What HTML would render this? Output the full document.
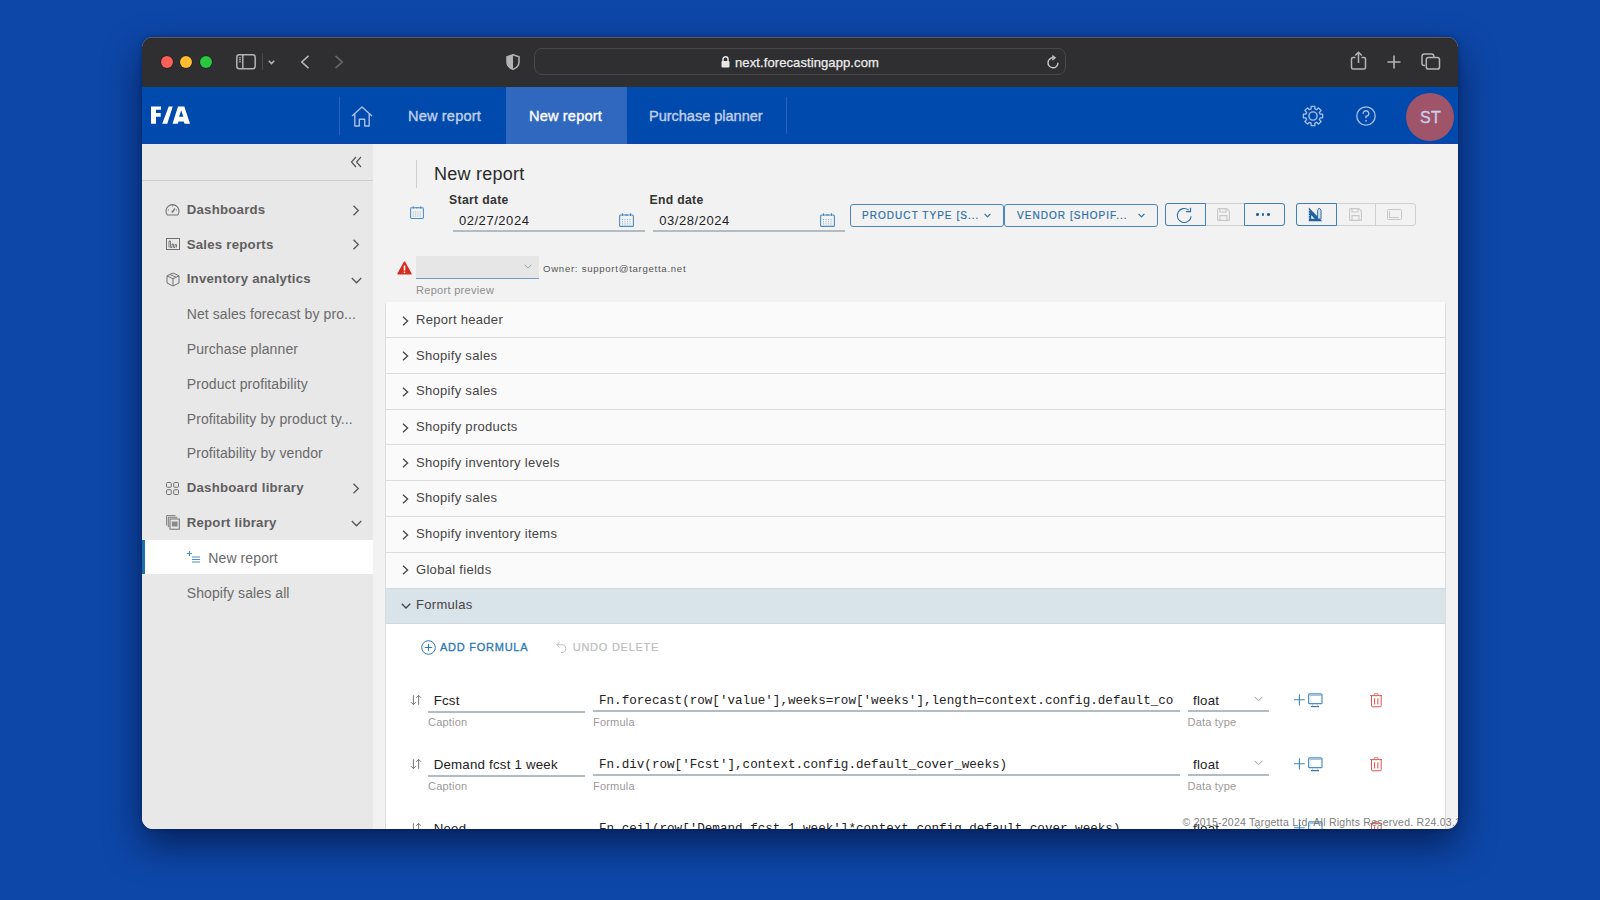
<!DOCTYPE html><html><head><meta charset="utf-8"><style>
*{margin:0;padding:0;box-sizing:border-box}
html,body{width:1600px;height:900px;overflow:hidden}
body{background:#0d47a8;font-family:"Liberation Sans",sans-serif;position:relative}
.a{position:absolute}
.t{position:absolute;white-space:nowrap;line-height:1}
svg{position:absolute;overflow:visible}
.win{position:absolute;left:142px;top:37px;width:1316px;height:792px;border-radius:11px;overflow:hidden;background:#f2f2f2;box-shadow:0 0 4px rgba(0,10,40,.3),0 16px 36px rgba(0,8,40,.6)}
.in{position:absolute;left:-142px;top:-37px;width:1600px;height:900px}
.sb{color:#5f5f5f;font-weight:bold;font-size:13.2px;letter-spacing:0.25px}
.sr{color:#6a6a6a;font-size:14px;letter-spacing:0.1px}
.acc{position:absolute;left:386px;width:1060px;height:36px;background:#fafafa;border-bottom:1px solid #dcdcdc}
.acct{position:absolute;left:30px;top:12px;font-size:13.5px;color:#444;white-space:nowrap;line-height:1;letter-spacing:0.15px}
.lbl{position:absolute;font-size:11px;color:#9a9a9a;white-space:nowrap;line-height:1;letter-spacing:0.2px}
.ul{position:absolute;height:2px;background:#b3bcc2}
.mono{position:absolute;font-family:"Liberation Mono",monospace;font-size:12.6px;color:#222;white-space:nowrap;line-height:1}
.btn{position:absolute;top:204px;height:23px;border:1px solid #4b87bf;border-radius:3px}
.gbtn{position:absolute;top:204px;height:22px;border:1px solid #d2d2d2;border-radius:3px}
</style></head><body>
<div class="win"><div class="in">
<div class="a" style="left:142px;top:37px;width:1316px;height:50px;background:#2f2f31;border-top:1px solid #5c5c5e"></div>
<div class="a" style="left:161px;top:55.8px;width:12px;height:12px;border-radius:50%;background:#fe5f57;box-shadow:0 0 0 0.6px rgba(0,0,0,.35)"></div>
<div class="a" style="left:180.3px;top:55.8px;width:12px;height:12px;border-radius:50%;background:#febc2e;box-shadow:0 0 0 0.6px rgba(0,0,0,.35)"></div>
<div class="a" style="left:199.5px;top:55.8px;width:12px;height:12px;border-radius:50%;background:#28c840;box-shadow:0 0 0 0.6px rgba(0,0,0,.35)"></div>
<svg style="left:236px;top:53.5px" width="20" height="16" viewBox="0 0 20 16"><rect x="0.8" y="0.8" width="18.4" height="14" rx="2.5" fill="none" stroke="#b4b4b6" stroke-width="1.5"/><line x1="6.8" y1="1" x2="6.8" y2="15" stroke="#b4b4b6" stroke-width="1.5"/><path d="M2.8 3.8 H5 M2.8 5.8 H5 M2.8 7.8 H5" stroke="#b4b4b6" stroke-width="1"/></svg>
<div class="a" style="left:262px;top:53px;width:1px;height:17px;background:#4a4a4c"></div>
<svg style="left:268px;top:59.5px" width="7" height="5" viewBox="0 0 7 5"><path d="M0.8 0.8 L3.5 3.6 L6.2 0.8" fill="none" stroke="#b4b4b6" stroke-width="1.6"/></svg>
<svg style="left:300px;top:55px" width="10" height="14" viewBox="0 0 10 14"><path d="M8.5 0.8 L1.8 7 L8.5 13.2" fill="none" stroke="#b4b4b6" stroke-width="1.6"/></svg>
<svg style="left:334px;top:55px" width="10" height="14" viewBox="0 0 10 14"><path d="M1.5 0.8 L8.2 7 L1.5 13.2" fill="none" stroke="#68686a" stroke-width="1.6"/></svg>
<svg style="left:506px;top:54px" width="14" height="16" viewBox="0 0 14 16"><path d="M7 0.8 L13 2.8 L13 8 C13 11.5 10.5 14 7 15.3 C3.5 14 1 11.5 1 8 L1 2.8 Z" fill="none" stroke="#b4b4b6" stroke-width="1.5"/><path d="M7 0.8 L1 2.8 L1 8 C1 11.5 3.5 14 7 15.3 Z" fill="#b4b4b6"/></svg>
<div class="a" style="left:534px;top:48px;width:532px;height:27px;border-radius:8px;border:1px solid #48484a"></div>
<svg style="left:721px;top:55.5px" width="9" height="12" viewBox="0 0 9 12"><path d="M2 5.5 V3.3 A2.5 2.5 0 0 1 7 3.3 V5.5" fill="none" stroke="#e8e8e8" stroke-width="1.5"/><rect x="0.5" y="5" width="8" height="6.5" rx="1" fill="#e8e8e8"/></svg>
<div class="t" style="left:735px;top:55.5px;font-size:13px;color:#ededed;letter-spacing:0.1px;-webkit-text-stroke:0.25px #ededed">next.forecastingapp.com</div>
<svg style="left:1047px;top:55px" width="13" height="14" viewBox="0 0 13 14"><path d="M11 7.8 A5 5 0 1 1 6.5 2.8" fill="none" stroke="#c8c8ca" stroke-width="1.4"/><path d="M5.3 0.6 L8 2.8 L5.3 5" fill="none" stroke="#c8c8ca" stroke-width="1.4"/></svg>
<svg style="left:1350px;top:51px" width="17" height="19" viewBox="0 0 17 19"><path d="M5.5 6.5 H3 Q1.5 6.5 1.5 8 V16.5 Q1.5 18 3 18 H14 Q15.5 18 15.5 16.5 V8 Q15.5 6.5 14 6.5 H11.5" fill="none" stroke="#b4b4b6" stroke-width="1.5"/><path d="M8.5 12 V1.3 M5.2 4.5 L8.5 1.2 L11.8 4.5" fill="none" stroke="#b4b4b6" stroke-width="1.5"/></svg>
<svg style="left:1387px;top:54.5px" width="14" height="14" viewBox="0 0 14 14"><path d="M7 0.5 V13.5 M0.5 7 H13.5" fill="none" stroke="#b4b4b6" stroke-width="1.6"/></svg>
<svg style="left:1421px;top:52.5px" width="20" height="17" viewBox="0 0 20 17"><path d="M4 12.5 H3.3 Q1 12.5 1 10.2 V3.3 Q1 1 3.3 1 H10.5 Q12.8 1 12.8 3.3 V4" fill="none" stroke="#b4b4b6" stroke-width="1.5"/><rect x="5.3" y="4.6" width="13.2" height="11.5" rx="2.2" fill="none" stroke="#b4b4b6" stroke-width="1.5"/></svg>
<div class="a" style="left:142px;top:87px;width:1316px;height:57px;background:#004aad;border-bottom:1px solid #1c3daa"></div>
<svg style="left:146px;top:100px" width="50" height="30" viewBox="146 100 50 30"><path fill="#fff" d="M151 106.5 H161 V109.8 H156 V113 H160.7 V116.8 H156 V123.8 H151 Z M168.7 106.5 H172.7 L167.3 123.8 H162.2 Z M178 106.5 H184.3 L190 123.8 H184.6 L183.6 121.6 H178.6 L177.8 123.8 H172.5 Z M181.2 110.2 L179.1 116.8 H183.3 Z"/></svg>
<div class="a" style="left:339px;top:97px;width:1px;height:38px;background:#2a60b8"></div>
<svg style="left:351px;top:105.5px" width="22" height="21" viewBox="0 0 22 21"><path d="M1 10 L11 1 L21 10 M3.8 7.8 V20 H8.3 V13.2 H13.7 V20 H18.2 V7.8" fill="none" stroke="#a9bfe6" stroke-width="1.4" stroke-linejoin="round"/></svg>
<div class="a" style="left:506px;top:87px;width:121px;height:57px;background:#3068bf"></div>
<div class="t" style="left:408px;top:109px;color:#c2cfeb;font-size:14.6px;letter-spacing:0.15px;-webkit-text-stroke:0.35px #c2cfeb">New report</div>
<div class="t" style="left:529px;top:109px;color:#fff;font-size:14.6px;letter-spacing:0.15px;-webkit-text-stroke:0.35px #fff">New report</div>
<div class="t" style="left:649px;top:109px;color:#c2cfeb;font-size:14.6px;letter-spacing:0.15px;-webkit-text-stroke:0.35px #c2cfeb;letter-spacing:-0.05px">Purchase planner</div>
<div class="a" style="left:786px;top:97px;width:1px;height:37px;background:#2a60b8"></div>
<svg style="left:1302px;top:104.7px" width="22" height="22" viewBox="0 0 22 22"><path d="M9.11 3.95 L9.13 1.38 L12.87 1.38 L12.89 3.95 L14.65 4.68 L16.48 2.88 L19.12 5.52 L17.32 7.35 L18.05 9.11 L20.62 9.13 L20.62 12.87 L18.05 12.89 L17.32 14.65 L19.12 16.48 L16.48 19.12 L14.65 17.32 L12.89 18.05 L12.87 20.62 L9.13 20.62 L9.11 18.05 L7.35 17.32 L5.52 19.12 L2.88 16.48 L4.68 14.65 L3.95 12.89 L1.38 12.87 L1.38 9.13 L3.95 9.11 L4.68 7.35 L2.88 5.52 L5.52 2.88 L7.35 4.68 Z" fill="none" stroke="#a9bfe6" stroke-width="1.3" stroke-linejoin="round"/><circle cx="11" cy="11" r="4.1" fill="none" stroke="#a9bfe6" stroke-width="1.4"/></svg>
<svg style="left:1356px;top:106px" width="20" height="20" viewBox="0 0 20 20"><circle cx="10" cy="10" r="9.2" fill="none" stroke="#a9bfe6" stroke-width="1.3"/><path d="M7.2 7.7 A2.8 2.8 0 1 1 10 10.3 V12.2" fill="none" stroke="#a9bfe6" stroke-width="1.4"/><circle cx="10" cy="14.8" r="0.9" fill="#a9bfe6"/></svg>
<div class="a" style="left:1405.6px;top:92.7px;width:48px;height:48px;border-radius:50%;background:#a0546a"></div>
<div class="t" style="left:1420px;top:109.5px;font-size:16px;color:#c9d2ea;letter-spacing:0.4px;-webkit-text-stroke:0.3px #c9d2ea">ST</div>
<div class="a" style="left:142px;top:144px;width:231px;height:700px;background:#e8e8e8"></div>
<svg style="left:350px;top:156px" width="12" height="12" viewBox="0 0 12 12"><path d="M6 1 L1.5 6 L6 11 M11 1 L6.5 6 L11 11" fill="none" stroke="#555" stroke-width="1.2"/></svg>
<div class="a" style="left:142px;top:180px;width:231px;height:1px;background:#cfcfcf"></div>
<div class="t sb" style="left:186.7px;top:202.8px">Dashboards</div>
<svg style="left:165px;top:202.5px" width="15" height="13" viewBox="0 0 15 13"><path d="M2.3 12 A6.5 6.5 0 1 1 12.7 12 Z" fill="none" stroke="#707070" stroke-width="1.1" stroke-linejoin="round"/><path d="M7.5 8.8 L10 5.5" stroke="#707070" stroke-width="1.3"/><circle cx="7.5" cy="8.8" r="1" fill="#707070"/><path d="M3 7 H4 M11 7 H12 M7.5 2.5 V3.5" stroke="#707070" stroke-width="0.9"/></svg>
<div class="t sb" style="left:186.7px;top:237.6px">Sales reports</div>
<svg style="left:165.5px;top:238px" width="14" height="12" viewBox="0 0 14 12"><rect x="0.5" y="0.5" width="13" height="11" fill="none" stroke="#707070" stroke-width="1"/><path d="M3 9.5 V3 H4.5 V9.5 H6 V6 H7.5 V9.5 H9 V6.5 H10.5 V9.5" fill="none" stroke="#707070" stroke-width="0.9"/></svg>
<div class="t sb" style="left:186.7px;top:272.4px">Inventory analytics</div>
<svg style="left:165.5px;top:271.5px" width="14" height="15" viewBox="0 0 14 15"><path d="M7 1 L13 3.8 V11 L7 14 L1 11 V3.8 Z M1 3.8 L7 6.8 L13 3.8 M7 6.8 V14 M4 2.4 L10 5.3" fill="none" stroke="#707070" stroke-width="1" stroke-linejoin="round"/></svg>
<svg style="left:352px;top:204.5px" width="8" height="11" viewBox="0 0 8 11"><path d="M1.5 0.8 L6.3 5.5 L1.5 10.2" fill="none" stroke="#555" stroke-width="1.3"/></svg>
<svg style="left:352px;top:239.3px" width="8" height="11" viewBox="0 0 8 11"><path d="M1.5 0.8 L6.3 5.5 L1.5 10.2" fill="none" stroke="#555" stroke-width="1.3"/></svg>
<svg style="left:350.5px;top:276.5px" width="11" height="7" viewBox="0 0 11 7"><path d="M0.8 1 L5.5 5.8 L10.2 1" fill="none" stroke="#555" stroke-width="1.3"/></svg>
<div class="t sr" style="left:186.7px;top:307.2px">Net sales forecast by pro...</div>
<div class="t sr" style="left:186.7px;top:342.0px">Purchase planner</div>
<div class="t sr" style="left:186.7px;top:376.8px">Product profitability</div>
<div class="t sr" style="left:186.7px;top:411.6px">Profitability by product ty...</div>
<div class="t sr" style="left:186.7px;top:446.4px">Profitability by vendor</div>
<div class="t sb" style="left:186.7px;top:481.2px">Dashboard library</div>
<svg style="left:166px;top:481.5px" width="13" height="13" viewBox="0 0 13 13"><rect x="0.5" y="0.5" width="4.8" height="4.8" rx="1" fill="none" stroke="#707070" stroke-width="1"/><rect x="7.7" y="0.5" width="4.8" height="4.8" rx="1" fill="none" stroke="#707070" stroke-width="1"/><rect x="0.5" y="7.7" width="4.8" height="4.8" rx="1" fill="none" stroke="#707070" stroke-width="1"/><rect x="7.7" y="7.7" width="4.8" height="4.8" rx="1" fill="none" stroke="#707070" stroke-width="1"/></svg>
<svg style="left:352px;top:483px" width="8" height="11" viewBox="0 0 8 11"><path d="M1.5 0.8 L6.3 5.5 L1.5 10.2" fill="none" stroke="#555" stroke-width="1.3"/></svg>
<div class="t sb" style="left:186.7px;top:516.0px">Report library</div>
<svg style="left:166px;top:515px" width="14" height="15" viewBox="0 0 14 15"><path d="M0.6 10.5 V0.6 H9.5" fill="none" stroke="#707070" stroke-width="0.9"/><path d="M2.3 12.2 V2.3 H11.2" fill="none" stroke="#707070" stroke-width="0.9"/><rect x="4" y="4" width="9.3" height="10.2" fill="none" stroke="#707070" stroke-width="1"/><rect x="5.8" y="6.5" width="5.8" height="5" fill="#8a8a8a"/></svg>
<svg style="left:350.5px;top:519.5px" width="11" height="7" viewBox="0 0 11 7"><path d="M0.8 1 L5.5 5.8 L10.2 1" fill="none" stroke="#555" stroke-width="1.3"/></svg>
<div class="a" style="left:142px;top:539.8px;width:231px;height:34.2px;background:#fff"></div>
<div class="a" style="left:142px;top:540px;width:3px;height:34px;background:#1a70aa"></div>
<svg style="left:187px;top:551px" width="14" height="12" viewBox="0 0 14 12"><path d="M2.5 0 V5 M0 2.5 H5" stroke="#4a90c8" stroke-width="1.2"/><path d="M5 6 H13 M5 8.5 H13 M5 11 H13" stroke="#4a90c8" stroke-width="1.2"/></svg>
<div class="t sr" style="left:208.3px;top:550.8px">New report</div>
<div class="t sr" style="left:186.7px;top:585.6px">Shopify sales all</div>
<div class="a" style="left:416px;top:159.5px;width:1px;height:28px;background:#cfcfcf"></div>
<div class="t" style="left:434px;top:164.8px;font-size:18px;color:#2a2a2a;letter-spacing:0.25px">New report</div>
<div class="t" style="left:449px;top:194.2px;font-size:12.2px;color:#333;font-weight:bold;letter-spacing:0.35px">Start date</div>
<div class="t" style="left:649.6px;top:194.2px;font-size:12.2px;color:#333;font-weight:bold;letter-spacing:0.3px">End date</div>
<svg style="left:410px;top:206px" width="14" height="13" viewBox="0 0 15 14"><rect x="0.6" y="2" width="13.8" height="11.4" rx="1" fill="none" stroke="#4a8bc4" stroke-width="1.1"/><path d="M3.5 0.3 V3 M11.5 0.3 V3 M6 2 H9" stroke="#4a8bc4" stroke-width="1.1"/><path d="M3 6.5 H4 M5.5 6.5 H6.5 M8 6.5 H9 M10.5 6.5 H11.5 M3 8.7 H4 M5.5 8.7 H6.5 M8 8.7 H9 M10.5 8.7 H11.5 M3 10.9 H4 M5.5 10.9 H6.5 M8 10.9 H9 M10.5 10.9 H11.5" stroke="#86aed0" stroke-width="1"/></svg>
<div class="t" style="left:458.9px;top:214px;font-size:13px;color:#222;letter-spacing:0.55px">02/27/2024</div>
<div class="t" style="left:659.2px;top:214px;font-size:13px;color:#222;letter-spacing:0.55px">03/28/2024</div>
<svg style="left:619px;top:212.5px" width="15" height="14" viewBox="0 0 15 14"><rect x="0.6" y="2" width="13.8" height="11.4" rx="1" fill="none" stroke="#4a8bc4" stroke-width="1.1"/><path d="M3.5 0.3 V3 M11.5 0.3 V3 M6 2 H9" stroke="#4a8bc4" stroke-width="1.1"/><path d="M3 6.5 H4 M5.5 6.5 H6.5 M8 6.5 H9 M10.5 6.5 H11.5 M3 8.7 H4 M5.5 8.7 H6.5 M8 8.7 H9 M10.5 8.7 H11.5 M3 10.9 H4 M5.5 10.9 H6.5 M8 10.9 H9 M10.5 10.9 H11.5" stroke="#86aed0" stroke-width="1"/></svg>
<svg style="left:819.5px;top:212.5px" width="15" height="14" viewBox="0 0 15 14"><rect x="0.6" y="2" width="13.8" height="11.4" rx="1" fill="none" stroke="#4a8bc4" stroke-width="1.1"/><path d="M3.5 0.3 V3 M11.5 0.3 V3 M6 2 H9" stroke="#4a8bc4" stroke-width="1.1"/><path d="M3 6.5 H4 M5.5 6.5 H6.5 M8 6.5 H9 M10.5 6.5 H11.5 M3 8.7 H4 M5.5 8.7 H6.5 M8 8.7 H9 M10.5 8.7 H11.5 M3 10.9 H4 M5.5 10.9 H6.5 M8 10.9 H9 M10.5 10.9 H11.5" stroke="#86aed0" stroke-width="1"/></svg>
<div class="ul" style="left:452.7px;top:230px;width:192px"></div>
<div class="ul" style="left:653px;top:230px;width:192px"></div>
<div class="btn" style="left:849.7px;width:154px"></div>
<div class="btn" style="left:1004.3px;width:154px"></div>
<div class="t" style="left:862px;top:210.5px;font-size:10px;color:#2a6fa8;letter-spacing:1.05px;-webkit-text-stroke:0.2px #2a6fa8">PRODUCT TYPE [S...</div>
<div class="t" style="left:1017px;top:210.5px;font-size:10px;color:#2a6fa8;letter-spacing:1.05px;-webkit-text-stroke:0.2px #2a6fa8">VENDOR [SHOPIF...</div>
<svg style="left:983.5px;top:213px" width="7" height="5" viewBox="0 0 7 5"><path d="M0.6 0.8 L3.5 3.8 L6.4 0.8" fill="none" stroke="#2a6fa8" stroke-width="1.2"/></svg>
<svg style="left:1137.5px;top:213px" width="7" height="5" viewBox="0 0 7 5"><path d="M0.6 0.8 L3.5 3.8 L6.4 0.8" fill="none" stroke="#2a6fa8" stroke-width="1.2"/></svg>
<div class="a" style="left:1164.5px;top:203px;width:120px;height:23px;border:1px solid #d0d0d0;border-radius:3px"></div>
<div class="a" style="left:1164.5px;top:203px;width:41px;height:23px;border:1.3px solid #3f80ba;border-radius:3px 0 0 3px"></div>
<div class="a" style="left:1243.5px;top:203px;width:41px;height:23px;border:1.3px solid #3f80ba;border-radius:0 3px 3px 0"></div>
<svg style="left:1176px;top:206.5px" width="17" height="17" viewBox="0 0 17 17"><path d="M15.2 9.4 A7 7 0 1 1 12.6 3.0" fill="none" stroke="#2a6fa8" stroke-width="1.1"/><path d="M9.9 4.6 H14.5 V0.8" fill="none" stroke="#2a6fa8" stroke-width="1.2"/></svg>
<svg style="left:1217.3px;top:207.8px" width="13" height="13" viewBox="0 0 13 13"><path d="M1.6 0.6 H9.8 L12.4 3.2 V11.4 Q12.4 12.4 11.4 12.4 H1.6 Q0.6 12.4 0.6 11.4 V1.6 Q0.6 0.6 1.6 0.6 Z" fill="none" stroke="#c8c8c8" stroke-width="1.1"/><path d="M3 0.6 V4 H9 V0.6 M3 12.4 V7.6 H10 V12.4" fill="none" stroke="#c8c8c8" stroke-width="1.1"/></svg>
<div class="a" style="left:1255.95px;top:213.1px;width:2.7px;height:2.7px;border-radius:50%;background:#1f66a6"></div>
<div class="a" style="left:1261.65px;top:213.1px;width:2.7px;height:2.7px;border-radius:50%;background:#1f66a6"></div>
<div class="a" style="left:1267.3500000000001px;top:213.1px;width:2.7px;height:2.7px;border-radius:50%;background:#1f66a6"></div>
<div class="a" style="left:1295.5px;top:203px;width:120px;height:23px;border:1px solid #d0d0d0;border-radius:3px"></div>
<div class="a" style="left:1375px;top:203px;width:1px;height:23px;background:#d0d0d0"></div>
<div class="a" style="left:1295.5px;top:203px;width:41px;height:23px;border:1.3px solid #3f80ba;border-radius:3px 0 0 3px"></div>
<svg style="left:1308px;top:206.5px" width="15" height="15" viewBox="0 0 15 15"><path d="M0.8 0.5 L14.2 14.2 H0.8 Z" fill="#1f63a0"/><path d="M3.2 8.2 V11.8 H6.8 Z" fill="#f2f2f2"/><path d="M0.4 3.5 H1.8 M0.4 6 H1.8 M0.4 8.5 H1.8 M0.4 11 H1.8" stroke="#f2f2f2" stroke-width="0.7"/><path d="M9.6 12 V3.2 L11.3 1 L13 3.2 V12 Z" fill="#cfe0ee" stroke="#1f63a0" stroke-width="0.9"/></svg>
<svg style="left:1348.6px;top:208px" width="13" height="13" viewBox="0 0 13 13"><path d="M1.6 0.6 H9.8 L12.4 3.2 V11.4 Q12.4 12.4 11.4 12.4 H1.6 Q0.6 12.4 0.6 11.4 V1.6 Q0.6 0.6 1.6 0.6 Z" fill="none" stroke="#c8c8c8" stroke-width="1.1"/><path d="M3 0.6 V4 H9 V0.6 M3 12.4 V7.6 H10 V12.4" fill="none" stroke="#c8c8c8" stroke-width="1.1"/></svg>
<div class="a" style="left:1387.3px;top:208.7px;width:14.3px;height:11px;border:1.1px solid #c8c8c8;border-radius:1.5px"></div>
<div class="a" style="left:1389.4px;top:210.6px;width:1px;height:7px;background:#c8c8c8"></div>
<div class="a" style="left:1389.4px;top:217.2px;width:10px;height:1px;background:#c8c8c8"></div>
<svg style="left:397px;top:260.5px" width="15" height="14" viewBox="0 0 15 14"><path d="M7.5 1.2 L14 12.8 H1 Z" fill="#d92a1f" stroke="#d92a1f" stroke-width="1.4" stroke-linejoin="round"/><path d="M7.5 4.5 V9.5" stroke="#fff" stroke-width="1.6"/><circle cx="7.5" cy="11.3" r="0.9" fill="#fff"/></svg>
<div class="a" style="left:416px;top:256px;width:122.5px;height:22.5px;background:#e6e6e6;border-bottom:1px solid #6e9cc6"></div>
<svg style="left:524px;top:264px" width="8" height="5" viewBox="0 0 8 5"><path d="M0.6 0.8 L4 4 L7.4 0.8" fill="none" stroke="#9aa6b2" stroke-width="1"/></svg>
<div class="t" style="left:543px;top:264.4px;font-size:9.6px;color:#555;letter-spacing:0.72px">Owner: support@targetta.net</div>
<div class="t" style="left:416px;top:285.3px;font-size:11px;color:#8e8e8e;letter-spacing:0.3px">Report preview</div>
<div class="a" style="left:385px;top:301.5px;width:1061px;height:560px;border:1px solid #dcdcdc;border-radius:3px 3px 0 0;background:#fff"></div>
<div class="a" style="left:386px;top:302px;width:1059px;height:35px;background:#fafafa"></div>
<div class="a" style="left:386px;top:337px;width:1059px;height:1px;background:#dcdcdc"></div>
<svg style="left:402px;top:315.5px" width="7" height="10" viewBox="0 0 7 10"><path d="M1 0.8 L5.6 5 L1 9.2" fill="none" stroke="#444" stroke-width="1.3"/></svg>
<div class="t" style="left:416px;top:312.8px;font-size:13px;color:#444;letter-spacing:0.3px">Report header</div>
<div class="a" style="left:386px;top:338px;width:1059px;height:35px;background:#fafafa"></div>
<div class="a" style="left:386px;top:373px;width:1059px;height:1px;background:#dcdcdc"></div>
<svg style="left:402px;top:351.2px" width="7" height="10" viewBox="0 0 7 10"><path d="M1 0.8 L5.6 5 L1 9.2" fill="none" stroke="#444" stroke-width="1.3"/></svg>
<div class="t" style="left:416px;top:348.5px;font-size:13px;color:#444;letter-spacing:0.3px">Shopify sales</div>
<div class="a" style="left:386px;top:374px;width:1059px;height:35px;background:#fafafa"></div>
<div class="a" style="left:386px;top:409px;width:1059px;height:1px;background:#dcdcdc"></div>
<svg style="left:402px;top:386.9px" width="7" height="10" viewBox="0 0 7 10"><path d="M1 0.8 L5.6 5 L1 9.2" fill="none" stroke="#444" stroke-width="1.3"/></svg>
<div class="t" style="left:416px;top:384.2px;font-size:13px;color:#444;letter-spacing:0.3px">Shopify sales</div>
<div class="a" style="left:386px;top:410px;width:1059px;height:34px;background:#fafafa"></div>
<div class="a" style="left:386px;top:444px;width:1059px;height:1px;background:#dcdcdc"></div>
<svg style="left:402px;top:422.6px" width="7" height="10" viewBox="0 0 7 10"><path d="M1 0.8 L5.6 5 L1 9.2" fill="none" stroke="#444" stroke-width="1.3"/></svg>
<div class="t" style="left:416px;top:419.9px;font-size:13px;color:#444;letter-spacing:0.3px">Shopify products</div>
<div class="a" style="left:386px;top:445px;width:1059px;height:35px;background:#fafafa"></div>
<div class="a" style="left:386px;top:480px;width:1059px;height:1px;background:#dcdcdc"></div>
<svg style="left:402px;top:458.3px" width="7" height="10" viewBox="0 0 7 10"><path d="M1 0.8 L5.6 5 L1 9.2" fill="none" stroke="#444" stroke-width="1.3"/></svg>
<div class="t" style="left:416px;top:455.6px;font-size:13px;color:#444;letter-spacing:0.3px">Shopify inventory levels</div>
<div class="a" style="left:386px;top:481px;width:1059px;height:35px;background:#fafafa"></div>
<div class="a" style="left:386px;top:516px;width:1059px;height:1px;background:#dcdcdc"></div>
<svg style="left:402px;top:494.0px" width="7" height="10" viewBox="0 0 7 10"><path d="M1 0.8 L5.6 5 L1 9.2" fill="none" stroke="#444" stroke-width="1.3"/></svg>
<div class="t" style="left:416px;top:491.3px;font-size:13px;color:#444;letter-spacing:0.3px">Shopify sales</div>
<div class="a" style="left:386px;top:517px;width:1059px;height:35px;background:#fafafa"></div>
<div class="a" style="left:386px;top:552px;width:1059px;height:1px;background:#dcdcdc"></div>
<svg style="left:402px;top:529.7px" width="7" height="10" viewBox="0 0 7 10"><path d="M1 0.8 L5.6 5 L1 9.2" fill="none" stroke="#444" stroke-width="1.3"/></svg>
<div class="t" style="left:416px;top:527.0px;font-size:13px;color:#444;letter-spacing:0.3px">Shopify inventory items</div>
<div class="a" style="left:386px;top:553px;width:1059px;height:35px;background:#fafafa"></div>
<div class="a" style="left:386px;top:588px;width:1059px;height:1px;background:#dcdcdc"></div>
<svg style="left:402px;top:565.4px" width="7" height="10" viewBox="0 0 7 10"><path d="M1 0.8 L5.6 5 L1 9.2" fill="none" stroke="#444" stroke-width="1.3"/></svg>
<div class="t" style="left:416px;top:562.7px;font-size:13px;color:#444;letter-spacing:0.3px">Global fields</div>
<div class="a" style="left:386px;top:589px;width:1059px;height:34px;background:#d9e3ea"></div>
<div class="a" style="left:386px;top:588px;width:1059px;height:1px;background:#d3dbe1"></div>
<div class="a" style="left:386px;top:622.5px;width:1059px;height:1px;background:#d0d8de"></div>
<svg style="left:400.5px;top:603px" width="10" height="6" viewBox="0 0 10 6"><path d="M0.8 0.8 L5 5 L9.2 0.8" fill="none" stroke="#444" stroke-width="1.3"/></svg>
<div class="t" style="left:416px;top:598.4px;font-size:13px;color:#444;letter-spacing:0.3px">Formulas</div>
<svg style="left:421px;top:640px" width="15" height="15" viewBox="0 0 15 15"><circle cx="7.5" cy="7.5" r="6.8" fill="none" stroke="#2a78b5" stroke-width="1"/><path d="M7.5 3.8 V11.2 M3.8 7.5 H11.2" stroke="#2a78b5" stroke-width="1"/></svg>
<div class="t" style="left:440px;top:641.7px;font-size:11px;color:#2a78b5;letter-spacing:0.75px;-webkit-text-stroke:0.3px #2a78b5">ADD FORMULA</div>
<svg style="left:556px;top:641px" width="12" height="12" viewBox="0 0 12 12"><path d="M3.5 1 L0.8 3.8 L3.5 6.5 M0.8 3.8 H7 A4 4 0 0 1 7 11.5 H5" fill="none" stroke="#c4c4c4" stroke-width="1"/></svg>
<div class="t" style="left:572.7px;top:641.7px;font-size:11px;color:#bdbdbd;letter-spacing:0.75px;-webkit-text-stroke:0.2px #bdbdbd">UNDO DELETE</div>
<svg style="left:408px;top:692px" width="16" height="16" viewBox="408 692 16 16"><path d="M413.4 695.2 V704.6 M411 702.2 L413.4 704.6 L415.8 702.2 M418.6 704.8 V695.4 M416.2 697.8 L418.6 695.4 L421 697.8" fill="none" stroke="#6a6a6a" stroke-width="0.9"/></svg>
<div class="t" style="left:433.7px;top:693.7px;font-size:13.3px;color:#222;letter-spacing:0.2px">Fcst</div>
<div class="ul" style="left:427.5px;top:710.8px;width:157.5px"></div>
<div class="lbl" style="left:428px;top:717.2px">Caption</div>
<div class="a" style="left:599px;top:688px;width:575px;height:24px;overflow:hidden"><div class="mono" style="left:0;top:7.2px">Fn.forecast(row['value'],weeks=row['weeks'],length=context.config.default_cover_weeks)</div></div>
<div class="ul" style="left:593px;top:709.8px;width:587px"></div>
<div class="lbl" style="left:593px;top:717.2px">Formula</div>
<div class="t" style="left:1193px;top:693.7px;font-size:13.3px;color:#222;letter-spacing:0.2px">float</div>
<svg style="left:1253.5px;top:696px" width="9" height="6" viewBox="0 0 9 6"><path d="M0.6 0.8 L4.5 4.8 L8.4 0.8" fill="none" stroke="#9aa3aa" stroke-width="1"/></svg>
<div class="ul" style="left:1187.5px;top:710.0px;width:81px"></div>
<div class="lbl" style="left:1187.5px;top:717.2px">Data type</div>
<svg style="left:1288px;top:688px" width="40" height="24" viewBox="1288 688 40 24"><path d="M1299.4 694.2 V705.4 M1294 699.8 H1304.8" stroke="#3f86bf" stroke-width="1.1"/><rect x="1308.6" y="693.9" width="13.4" height="9.8" rx="1" fill="none" stroke="#4f8fc4" stroke-width="1.2"/><path d="M1309.5 695.3 H1321" stroke="#8ab4d8" stroke-width="1"/><path d="M1310.8 696 V702.5" stroke="#bcd3e8" stroke-width="0.6"/><path d="M1313 704 L1312 706.3 M1317 704 L1318 706.3" stroke="#8ab4d8" stroke-width="0.7"/><path d="M1311 706.6 H1319" stroke="#2d78b5" stroke-width="1.1"/></svg>
<svg style="left:1368px;top:688px" width="16" height="24" viewBox="1368 688 16 24"><path d="M1370.2 695.6 H1382" stroke="#e8504a" stroke-width="1"/><path d="M1374.3 695.4 V693.6 H1378 V695.4" fill="none" stroke="#ec7a74" stroke-width="0.9"/><path d="M1371.5 695.8 V705.8 Q1371.5 706.8 1372.5 706.8 H1380.2 Q1381.2 706.8 1381.2 705.8 V695.8" fill="none" stroke="#e8504a" stroke-width="1"/><path d="M1374.6 698.3 V704.4 M1377.9 698.3 V704.4" stroke="#e44a44" stroke-width="1"/></svg>
<svg style="left:408px;top:756px" width="16" height="16" viewBox="408 692 16 16"><path d="M413.4 695.2 V704.6 M411 702.2 L413.4 704.6 L415.8 702.2 M418.6 704.8 V695.4 M416.2 697.8 L418.6 695.4 L421 697.8" fill="none" stroke="#6a6a6a" stroke-width="0.9"/></svg>
<div class="t" style="left:433.7px;top:757.7px;font-size:13.3px;color:#222;letter-spacing:0.2px">Demand fcst 1 week</div>
<div class="ul" style="left:427.5px;top:774.8px;width:157.5px"></div>
<div class="lbl" style="left:428px;top:781.2px">Caption</div>
<div class="a" style="left:599px;top:752px;width:575px;height:24px;overflow:hidden"><div class="mono" style="left:0;top:7.2px">Fn.div(row['Fcst'],context.config.default_cover_weeks)</div></div>
<div class="ul" style="left:593px;top:773.8px;width:587px"></div>
<div class="lbl" style="left:593px;top:781.2px">Formula</div>
<div class="t" style="left:1193px;top:757.7px;font-size:13.3px;color:#222;letter-spacing:0.2px">float</div>
<svg style="left:1253.5px;top:760px" width="9" height="6" viewBox="0 0 9 6"><path d="M0.6 0.8 L4.5 4.8 L8.4 0.8" fill="none" stroke="#9aa3aa" stroke-width="1"/></svg>
<div class="ul" style="left:1187.5px;top:774.0px;width:81px"></div>
<div class="lbl" style="left:1187.5px;top:781.2px">Data type</div>
<svg style="left:1288px;top:752px" width="40" height="24" viewBox="1288 688 40 24"><path d="M1299.4 694.2 V705.4 M1294 699.8 H1304.8" stroke="#3f86bf" stroke-width="1.1"/><rect x="1308.6" y="693.9" width="13.4" height="9.8" rx="1" fill="none" stroke="#4f8fc4" stroke-width="1.2"/><path d="M1309.5 695.3 H1321" stroke="#8ab4d8" stroke-width="1"/><path d="M1310.8 696 V702.5" stroke="#bcd3e8" stroke-width="0.6"/><path d="M1313 704 L1312 706.3 M1317 704 L1318 706.3" stroke="#8ab4d8" stroke-width="0.7"/><path d="M1311 706.6 H1319" stroke="#2d78b5" stroke-width="1.1"/></svg>
<svg style="left:1368px;top:752px" width="16" height="24" viewBox="1368 688 16 24"><path d="M1370.2 695.6 H1382" stroke="#e8504a" stroke-width="1"/><path d="M1374.3 695.4 V693.6 H1378 V695.4" fill="none" stroke="#ec7a74" stroke-width="0.9"/><path d="M1371.5 695.8 V705.8 Q1371.5 706.8 1372.5 706.8 H1380.2 Q1381.2 706.8 1381.2 705.8 V695.8" fill="none" stroke="#e8504a" stroke-width="1"/><path d="M1374.6 698.3 V704.4 M1377.9 698.3 V704.4" stroke="#e44a44" stroke-width="1"/></svg>
<svg style="left:408px;top:820px" width="16" height="16" viewBox="408 692 16 16"><path d="M413.4 695.2 V704.6 M411 702.2 L413.4 704.6 L415.8 702.2 M418.6 704.8 V695.4 M416.2 697.8 L418.6 695.4 L421 697.8" fill="none" stroke="#6a6a6a" stroke-width="0.9"/></svg>
<div class="t" style="left:433.7px;top:821.7px;font-size:13.3px;color:#222;letter-spacing:0.2px">Need</div>
<div class="ul" style="left:427.5px;top:838.8px;width:157.5px"></div>
<div class="lbl" style="left:428px;top:845.2px">Caption</div>
<div class="a" style="left:599px;top:816px;width:575px;height:24px;overflow:hidden"><div class="mono" style="left:0;top:7.2px">Fn.ceil(row['Demand fcst 1 week']*context.config.default_cover_weeks)</div></div>
<div class="ul" style="left:593px;top:837.8px;width:587px"></div>
<div class="lbl" style="left:593px;top:845.2px">Formula</div>
<div class="t" style="left:1193px;top:821.7px;font-size:13.3px;color:#222;letter-spacing:0.2px">float</div>
<svg style="left:1253.5px;top:824px" width="9" height="6" viewBox="0 0 9 6"><path d="M0.6 0.8 L4.5 4.8 L8.4 0.8" fill="none" stroke="#9aa3aa" stroke-width="1"/></svg>
<div class="ul" style="left:1187.5px;top:838.0px;width:81px"></div>
<div class="lbl" style="left:1187.5px;top:845.2px">Data type</div>
<svg style="left:1288px;top:816px" width="40" height="24" viewBox="1288 688 40 24"><path d="M1299.4 694.2 V705.4 M1294 699.8 H1304.8" stroke="#3f86bf" stroke-width="1.1"/><rect x="1308.6" y="693.9" width="13.4" height="9.8" rx="1" fill="none" stroke="#4f8fc4" stroke-width="1.2"/><path d="M1309.5 695.3 H1321" stroke="#8ab4d8" stroke-width="1"/><path d="M1310.8 696 V702.5" stroke="#bcd3e8" stroke-width="0.6"/><path d="M1313 704 L1312 706.3 M1317 704 L1318 706.3" stroke="#8ab4d8" stroke-width="0.7"/><path d="M1311 706.6 H1319" stroke="#2d78b5" stroke-width="1.1"/></svg>
<svg style="left:1368px;top:816px" width="16" height="24" viewBox="1368 688 16 24"><path d="M1370.2 695.6 H1382" stroke="#e8504a" stroke-width="1"/><path d="M1374.3 695.4 V693.6 H1378 V695.4" fill="none" stroke="#ec7a74" stroke-width="0.9"/><path d="M1371.5 695.8 V705.8 Q1371.5 706.8 1372.5 706.8 H1380.2 Q1381.2 706.8 1381.2 705.8 V695.8" fill="none" stroke="#e8504a" stroke-width="1"/><path d="M1374.6 698.3 V704.4 M1377.9 698.3 V704.4" stroke="#e44a44" stroke-width="1"/></svg>
<div class="t" style="left:1182.5px;top:817.3px;font-size:10.5px;color:#7e7e7e;letter-spacing:0.25px">© 2015-2024 Targetta Ltd. All Rights Reserved. R24.03.1</div>
</div></div></body></html>
